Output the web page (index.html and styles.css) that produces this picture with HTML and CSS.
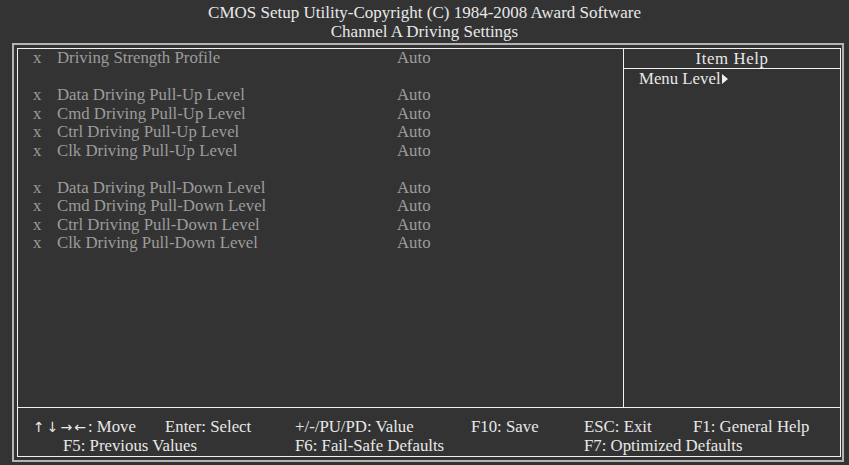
FILE: index.html
```html
<!DOCTYPE html>
<html lang="en">
<head>
  <meta charset="UTF-8">
  <meta name="viewport" content="width=device-width, initial-scale=1.0">
  <title>Channel A Driving Settings</title>
  <link rel="stylesheet" href="styles.css">
</head>
<body>
  <div class="header">
    <div>CMOS Setup Utility-Copyright (C) 1984-2008 Award Software</div>
    <div>Channel A Driving Settings</div>
  </div>
  <div class="frame">
    <div class="inner">
      <div class="main">
        <div class="items">
          <div class="row"><span>x</span><span>Driving Strength Profile</span><span>Auto</span></div>
          <div class="row blank"></div>
          <div class="row"><span>x</span><span>Data Driving Pull-Up Level</span><span>Auto</span></div>
          <div class="row"><span>x</span><span>Cmd Driving Pull-Up Level</span><span>Auto</span></div>
          <div class="row"><span>x</span><span>Ctrl Driving Pull-Up Level</span><span>Auto</span></div>
          <div class="row"><span>x</span><span>Clk Driving Pull-Up Level</span><span>Auto</span></div>
          <div class="row blank"></div>
          <div class="row"><span>x</span><span>Data Driving Pull-Down Level</span><span>Auto</span></div>
          <div class="row"><span>x</span><span>Cmd Driving Pull-Down Level</span><span>Auto</span></div>
          <div class="row"><span>x</span><span>Ctrl Driving Pull-Down Level</span><span>Auto</span></div>
          <div class="row"><span>x</span><span>Clk Driving Pull-Down Level</span><span>Auto</span></div>
        </div>
        <div class="help">
          <div class="help-title">Item Help</div>
          <div class="help-body">Menu Level<span class="tri"></span></div>
        </div>
      </div>
      <div class="footer">
        <span><span class="arrows">&uarr;&darr;&rarr;&larr;</span>: Move</span>
        <span>Enter: Select</span>
        <span>+/-/PU/PD: Value</span>
        <span>F10: Save</span>
        <span>ESC: Exit</span>
        <span>F1: General Help</span>
        <span class="f5">F5: Previous Values</span>
        <span class="f6">F6: Fail-Safe Defaults</span>
        <span class="f7">F7: Optimized Defaults</span>
      </div>
    </div>
  </div>
</body>
</html>
```

FILE: styles.css
```css
body {
  margin: 0;
  background-color: #333333;
  font-family: "Liberation Serif", "Times New Roman", serif;
  font-size: 16.8px;
  color: #e6e6e6;
  width: 849px;
  height: 465px;
  overflow: hidden;
}
.header {
  text-align: center;
  line-height: 19px;
  padding-top: 3px;
  height: 40px;
  box-sizing: border-box;
  color: #e8e8e8;
  font-size: 17px;
}
.frame {
  margin: 3px 5px 0 12px;
  border: 2px solid #b4b4b4;
  padding: 3px 1px 3px 3px;
  height: 419px;
  box-sizing: border-box;
}
.inner {
  border: 1px solid #f0f0f0;
  height: 100%;
  box-sizing: border-box;
  display: flex;
  flex-direction: column;
}
.main {
  display: flex;
  flex: 1;
  border-bottom: 1px solid #f0f0f0;
}
.items {
  width: 606px;
  box-sizing: border-box;
  border-right: 1px solid #f0f0f0;
  padding-left: 15px;
  color: #9c9c9c;
}
.row {
  display: grid;
  grid-template-columns: 24px 340px auto;
  height: 18.5px;
  line-height: 18.5px;
}
.help {
  flex: 1;
}
.help-title {
  text-align: center;
  letter-spacing: 0.6px;
  line-height: 18px;
  padding-top: 1px;
  border-bottom: 1px solid #f0f0f0;
  color: #e8e8e8;
}
.help-body {
  padding-left: 15px;
  line-height: 20px;
  color: #e8e8e8;
}
.tri {
  display: inline-block;
  width: 0;
  height: 0;
  border-top: 5px solid transparent;
  border-bottom: 5px solid transparent;
  border-left: 6px solid #f0f0f0;
  margin-left: 1px;
}
.footer {
  height: 48px;
  box-sizing: border-box;
  padding: 10px 0 0 15px;
  display: grid;
  grid-template-columns: 132px 130px 176px 113px 109px auto;
  line-height: 18px;
  color: #e8e8e8;
}
.arrows {
  font-family: "DejaVu Sans", sans-serif;
  font-size: 14px;
  letter-spacing: 2px;
}
.f5 {
  grid-column: 1 / 3;
  padding-left: 30px;
}
.f6 {
  grid-column: 3 / 5;
}
.f7 {
  grid-column: 5 / 7;
}
```
